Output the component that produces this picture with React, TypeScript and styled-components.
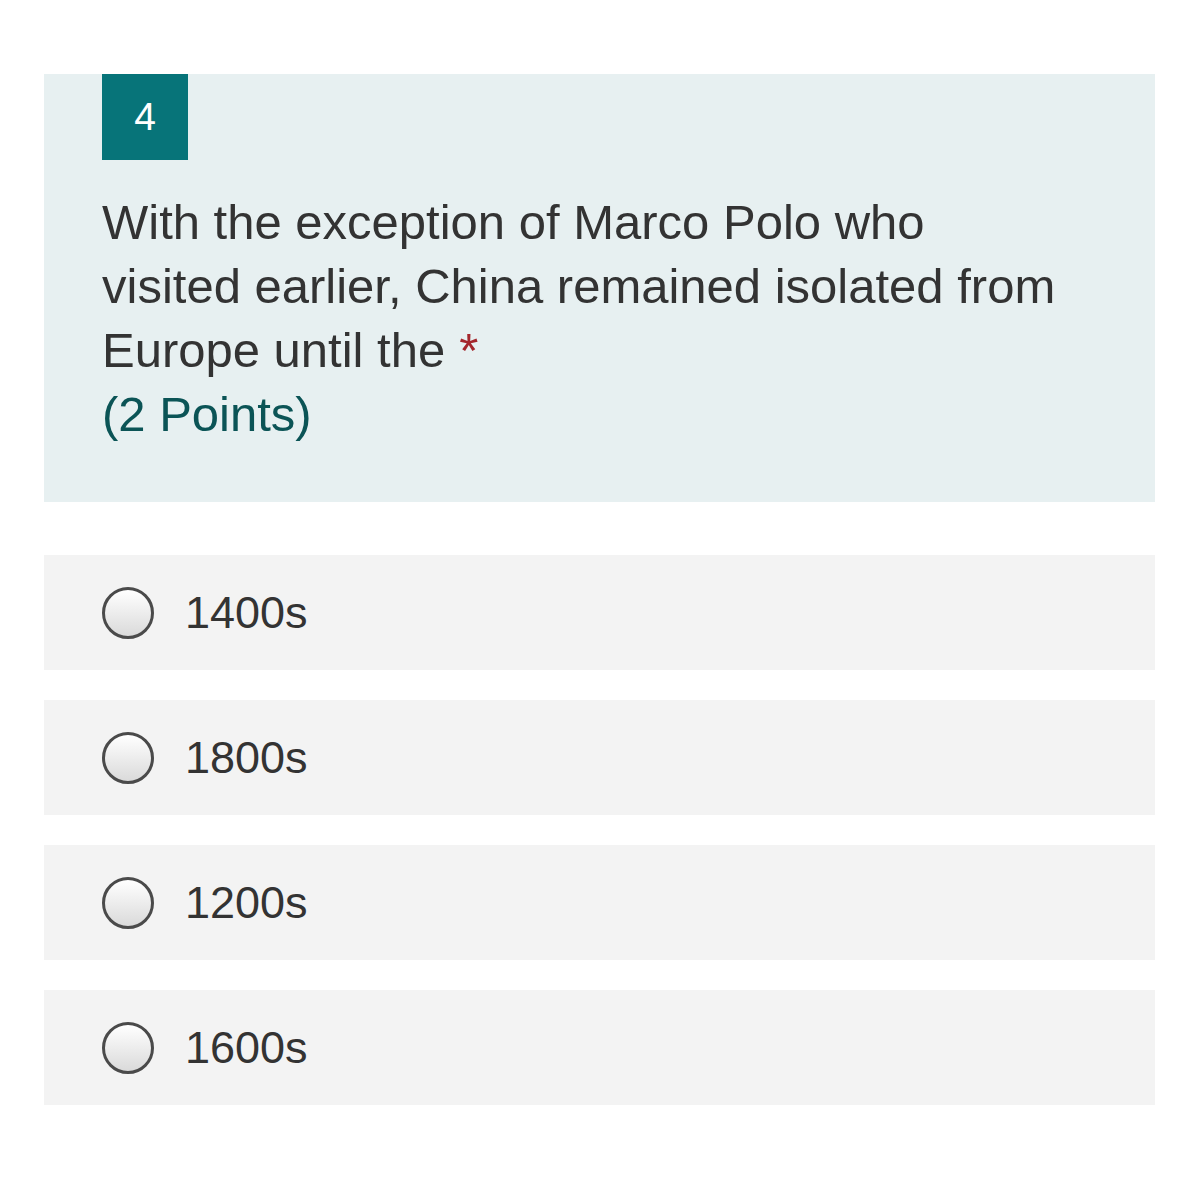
import styled, { createGlobalStyle } from "styled-components";

const GlobalStyle = createGlobalStyle`
  body {
    margin: 0;
    background: #ffffff;
    font-family: "Liberation Sans", Arial, sans-serif;
  }
`;

const Page = styled.div`
  padding: 74px 45px 60px 44px;
`;

const QuestionCard = styled.div`
  background: #e7f0f1;
  padding: 0 58px 56px;
`;

const NumberBadge = styled.div`
  width: 86px;
  height: 86px;
  background: #077479;
  color: #ffffff;
  display: flex;
  align-items: center;
  justify-content: center;
  font-size: 39px;
`;

const QuestionText = styled.div`
  margin-top: 30px;
  font-size: 49px;
  line-height: 64px;
  color: #333333;
`;

const Required = styled.span`
  color: #a4262c;
  margin-left: 14px;
`;

const Points = styled.div`
  color: #0b5456;
`;

const OptionList = styled.div`
  margin-top: 53px;
  display: flex;
  flex-direction: column;
  gap: 30px;
`;

const OptionRow = styled.label`
  height: 115px;
  background: #f3f3f3;
  display: flex;
  align-items: center;
  padding-left: 58px;
  gap: 31px;
  font-size: 45px;
  color: #333333;
`;

const Radio = styled.span`
  width: 52px;
  height: 52px;
  box-sizing: border-box;
  border-radius: 50%;
  border: 3px solid #4a4a4a;
  background: linear-gradient(#ffffff, #dadada);
  flex-shrink: 0;
`;

const options = ["1400s", "1800s", "1200s", "1600s"];

export default function App() {
  return (
    <>
      <GlobalStyle />
      <Page>
        <QuestionCard>
          <NumberBadge>4</NumberBadge>
          <QuestionText>
            With the exception of Marco Polo who
            <br />
            visited earlier, China remained isolated from
            <br />
            Europe until the<Required>*</Required>
            <Points>(2 Points)</Points>
          </QuestionText>
        </QuestionCard>
        <OptionList>
          {options.map((o) => (
            <OptionRow key={o}>
              <Radio />
              {o}
            </OptionRow>
          ))}
        </OptionList>
      </Page>
    </>
  );
}
